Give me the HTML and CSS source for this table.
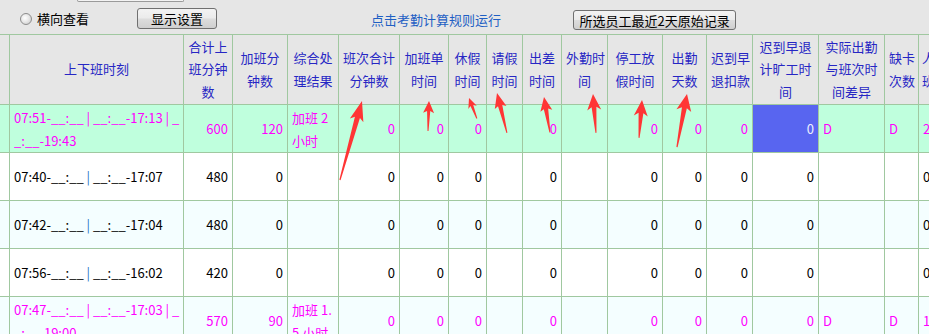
FILE: index.html
```html
<!DOCTYPE html>
<html lang="zh-CN">
<head>
<meta charset="utf-8">
<title>考勤明细</title>
<link rel="stylesheet" href="styles.css">
</head>
<body>
<div class="page">
  <div class="toolbar">
    <div class="stub"></div>
    <div class="controls">
      <span class="radio"></span>
      <span class="radio-label">横向查看</span>
      <button class="btn btn-settings">显示设置</button>
      <a class="run-link">点击考勤计算规则运行</a>
      <button class="btn btn-records">所选员工最近2天原始记录</button>
    </div>
  </div>
  <table class="grid">
    <colgroup>
      <col class="w10"><col class="w174"><col class="w49"><col class="w55"><col class="w51"><col class="w61"><col class="w49"><col class="w38"><col class="w36"><col class="w39"><col class="w46"><col class="w55"><col class="w44"><col class="w46"><col class="w66"><col class="w66"><col class="w34"><col class="w60">
    </colgroup>
    <thead>
      <tr>
        <th></th>
        <th>上下班时刻</th>
        <th>合计上<br>班分钟<br>数</th>
        <th>加班分<br>钟数</th>
        <th>综合处<br>理结果</th>
        <th>班次合计<br>分钟数</th>
        <th>加班单<br>时间</th>
        <th>休假<br>时间</th>
        <th>请假<br>时间</th>
        <th>出差<br>时间</th>
        <th>外勤时<br>间</th>
        <th>停工放<br>假时间</th>
        <th>出勤<br>天数</th>
        <th>迟到早<br>退扣款</th>
        <th>迟到早退<br>计旷工时<br>间</th>
        <th>实际出勤<br>与班次时<br>间差异</th>
        <th>缺卡<br>次数</th>
        <th class="cut">人工补卡<br>班次调整</th>
      </tr>
    </thead>
    <tbody>
      <tr class="hl">
        <td></td>
        <td class="time">07:51-__:__ | __:__-17:13 | _<br>_:__-19:43</td>
        <td class="num">600</td><td class="num">120</td>
        <td class="wrap">加班 2 小时</td>
        <td class="num">0</td><td class="num">0</td><td class="num">0</td><td></td><td class="num">0</td><td></td>
        <td class="num">0</td><td class="num">0</td><td class="num">0</td>
        <td class="num sel">0</td>
        <td>D</td><td>D</td><td>2</td>
      </tr>
      <tr>
        <td></td>
        <td class="time">07:40-__:__ <span class="sep">|</span> __:__-17:07</td>
        <td class="num">480</td><td class="num">0</td>
        <td></td>
        <td class="num">0</td><td class="num">0</td><td class="num">0</td><td></td><td class="num">0</td><td></td>
        <td class="num">0</td><td class="num">0</td><td class="num">0</td>
        <td class="num">0</td>
        <td></td><td></td><td>0</td>
      </tr>
      <tr class="alt">
        <td></td>
        <td class="time">07:42-__:__ <span class="sep">|</span> __:__-17:04</td>
        <td class="num">480</td><td class="num">0</td>
        <td></td>
        <td class="num">0</td><td class="num">0</td><td class="num">0</td><td></td><td class="num">0</td><td></td>
        <td class="num">0</td><td class="num">0</td><td class="num">0</td>
        <td class="num">0</td>
        <td></td><td></td><td>0</td>
      </tr>
      <tr>
        <td></td>
        <td class="time">07:56-__:__ <span class="sep">|</span> __:__-16:02</td>
        <td class="num">420</td><td class="num">0</td>
        <td></td>
        <td class="num">0</td><td class="num">0</td><td class="num">0</td><td></td><td class="num">0</td><td></td>
        <td class="num">0</td><td class="num">0</td><td class="num">0</td>
        <td class="num">0</td>
        <td></td><td></td><td>0</td>
      </tr>
      <tr class="alt mag">
        <td></td>
        <td class="time">07:47-__:__ | __:__-17:03 | _<br>_:__-19:00</td>
        <td class="num">570</td><td class="num">90</td>
        <td class="wrap">加班 1.5 小时</td>
        <td class="num">0</td><td class="num">0</td><td class="num">0</td><td></td><td class="num">0</td><td></td>
        <td class="num">0</td><td class="num">0</td><td class="num">0</td>
        <td class="num">0</td>
        <td>D</td><td>D</td><td>1</td>
      </tr>
    </tbody>
  </table>
  <svg class="arrows" width="929" height="334" viewBox="0 0 929 334" aria-hidden="true">
    <g fill="#ff3535">
      <polygon transform="translate(362,101) rotate(-74.4)" points="0,0 -20,-7 -17,-2.6 -82,-0.6 -82,0.6 -17,2.6 -20,7"/>
      <polygon transform="translate(429,101) rotate(-88.1)" points="0,0 -12,-5.5 -10,-1.6 -30,-0.5 -30,0.5 -10,1.6 -12,5.5"/>
      <polygon transform="translate(469,98) rotate(-110.9)" points="0,0 -10,-4.5 -8,-1.5 -22,-0.5 -22,0.5 -8,1.5 -10,4.5"/>
      <polygon transform="translate(497,93) rotate(-104)" points="0,0 -15,-6 -13,-2.2 -41,-0.5 -41,0.5 -13,2.2 -15,6"/>
      <polygon transform="translate(544,97) rotate(-99.5)" points="0,0 -14,-6 -12,-2.2 -36,-0.5 -36,0.5 -12,2.2 -14,6"/>
      <polygon transform="translate(593,94) rotate(-94.4)" points="0,0 -16,-7 -13,-2.4 -39,-0.5 -39,0.5 -13,2.4 -16,7"/>
      <polygon transform="translate(642,100) rotate(-85.5)" points="0,0 -16,-7 -13,-2.4 -38,-0.5 -38,0.5 -13,2.4 -16,7"/>
      <polygon transform="translate(687,94) rotate(-79.3)" points="0,0 -17,-7.5 -14,-2.5 -54,-0.6 -54,0.6 -14,2.5 -17,7.5"/>
    </g>
  </svg>
</div>
</body>
</html>
```
FILE: styles.css
```css
html, body {
  margin: 0;
  padding: 0;
  overflow: hidden;
  background: #e6e6e6;
}

.page {
  position: relative;
  width: 929px;
  height: 334px;
  overflow: hidden;
  font-family: "Noto Sans CJK SC", sans-serif;
  font-size: 13px;
  color: #000;
}

/* ---------- toolbar ---------- */
.toolbar {
  height: 34px;
  display: flex;
  flex-direction: column;
}

.stub {
  width: 105px;
  height: 1px;
  margin-left: 77px;
  border: 1px solid #9a9a9a;
  border-top: none;
  border-radius: 0 0 3px 3px;
  background: #f3f3f3;
}

.controls {
  height: 32px;
  display: flex;
  align-items: flex-start;
}

.radio {
  width: 10px;
  height: 10px;
  margin: 11px 0 0 20px;
  border: 1px solid #8d8d8d;
  border-radius: 50%;
  background: radial-gradient(circle at 40% 40%, #ffffff 0%, #e8e8e8 45%, #c4c4c4 100%);
  flex: none;
}

.radio-label {
  margin: 7px 0 0 5px;
  line-height: 20px;
  white-space: nowrap;
}

.btn {
  flex: none;
  padding: 0;
  font-family: "Noto Sans CJK SC", sans-serif;
  font-size: 13px;
  color: #000;
  border: 1px solid #707070;
  border-radius: 3px;
  background: linear-gradient(#f3f3f3 0%, #ebebeb 48%, #dddddd 52%, #cfcfcf 100%);
  line-height: 17px;
  white-space: nowrap;
}

.btn-settings {
  width: 80px;
  height: 21px;
  margin: 6px 0 0 48px;
}

.run-link {
  margin: 8px 0 0 154px;
  line-height: 20px;
  color: #1f5fc4;
  white-space: nowrap;
  cursor: pointer;
}

.btn-records {
  width: 163px;
  height: 20px;
  margin: 8px 0 0 72px;
}

/* ---------- grid ---------- */
.grid {
  border-collapse: separate;
  border-spacing: 0;
  table-layout: fixed;
  width: 978px;
  border-top: 1px solid #a0c8a0;
}

.w10 { width: 10px; }
.w174 { width: 174px; }
.w49 { width: 49px; }
.w55 { width: 55px; }
.w51 { width: 51px; }
.w61 { width: 61px; }
.w38 { width: 38px; }
.w36 { width: 36px; }
.w39 { width: 39px; }
.w46 { width: 46px; }
.w44 { width: 44px; }
.w66 { width: 66px; }
.w34 { width: 34px; }
.w60 { width: 60px; }

.grid th,
.grid td {
  box-sizing: border-box;
  border-right: 1px solid #a0c8a0;
  border-bottom: 1px solid #a0c8a0;
  padding: 0 4px;
  overflow: hidden;
  white-space: nowrap;
  vertical-align: middle;
}

.grid th {
  height: 70px;
  font-weight: normal;
  text-align: center;
  color: #2626c4;
  line-height: 22.5px;
  background: #e6e6e6;
}

.grid th.cut {
  text-align: left;
  padding-left: 3px;
}

.grid td {
  height: 48px;
  line-height: 23px;
  text-align: left;
  background: #ffffff;
}

.grid tr.alt td { background: #f4feff; }
.grid tr.hl td { background: #bfffdd; color: #ff00ff; }
.grid tr.mag td { color: #ff00ff; }

.grid td.num { text-align: right; padding-right: 4px; }
.grid td.time { padding-left: 4px; }
.grid td.wrap {
  white-space: normal;
  word-break: break-all;
  padding-right: 3px;
}

.sep { color: #1e74c8; }

.grid tr.hl td.sel {
  background: #5865f0;
  color: #eef0ff;
}

/* ---------- annotation arrows ---------- */
.arrows {
  position: absolute;
  left: 0;
  top: 0;
  pointer-events: none;
}
```
